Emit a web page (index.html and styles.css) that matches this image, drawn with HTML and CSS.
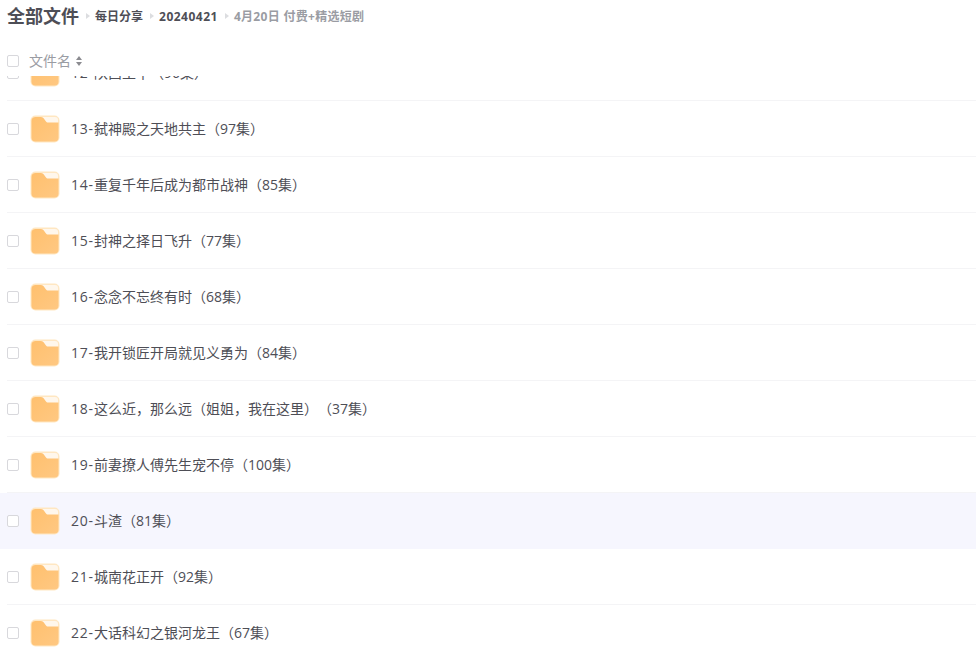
FILE: index.html
```html
<!DOCTYPE html>
<html lang="zh-CN">
<head>
<meta charset="utf-8">
<title>全部文件</title>
<link rel="stylesheet" href="styles.css">
</head>
<body>
<svg class="defs" width="0" height="0" aria-hidden="true">
  <defs>
    <linearGradient id="fg" x1="0" y1="0" x2="1" y2="1"><stop offset="0" stop-color="#ffc06e"/><stop offset="1" stop-color="#ffc882"/></linearGradient>
    <symbol id="folder" viewBox="0 0 30 28">
      <rect x="0.5" y="0.5" width="29" height="27" rx="5" fill="#ffe7c2"/>
      <rect x="2" y="2" width="26" height="22" rx="3" fill="#fff7ec"/>
      <path d="M1.500 6a4 4 0 0 1 4-4h5.500c1.500 0 2.200 .7 3 1.800l1.800 2.400c.6.8 1.200 1.300 2.200 1.300H28.500V23a4 4 0 0 1-4 3.500H5.500a4 4 0 0 1-4-3.500z" fill="url(#fg)"/>
    </symbol>
  </defs>
</svg>
<div class="page">
  <nav class="crumbs">
    <span class="crumb-root">全部文件</span>
    <span class="sep"></span><span class="crumb">每日分享</span>
    <span class="sep"></span><span class="crumb num">20240421</span>
    <span class="sep"></span><span class="crumb current">4月20日 付费+精选短剧</span>
  </nav>
  <div class="head">
    <span class="check"></span>
    <span class="head-label">文件名</span>
    <span class="sort"><i class="up"></i><i class="down"></i></span>
  </div>
  <div class="viewport">
    <ul class="list">
      <li class="row"><div class="row-inner"><span class="check"></span><svg class="icon"><use href="#folder"/></svg><span class="name"><span class="idx">12-</span>陕西王千（96集）</span></div></li>
      <li class="row"><div class="row-inner"><span class="check"></span><svg class="icon"><use href="#folder"/></svg><span class="name"><span class="idx">13-</span>弑神殿之天地共主（97集）</span></div></li>
      <li class="row"><div class="row-inner"><span class="check"></span><svg class="icon"><use href="#folder"/></svg><span class="name"><span class="idx">14-</span>重复千年后成为都市战神（85集）</span></div></li>
      <li class="row"><div class="row-inner"><span class="check"></span><svg class="icon"><use href="#folder"/></svg><span class="name"><span class="idx">15-</span>封神之择日飞升（77集）</span></div></li>
      <li class="row"><div class="row-inner"><span class="check"></span><svg class="icon"><use href="#folder"/></svg><span class="name"><span class="idx">16-</span>念念不忘终有时（68集）</span></div></li>
      <li class="row"><div class="row-inner"><span class="check"></span><svg class="icon"><use href="#folder"/></svg><span class="name"><span class="idx">17-</span>我开锁匠开局就见义勇为（84集）</span></div></li>
      <li class="row"><div class="row-inner"><span class="check"></span><svg class="icon"><use href="#folder"/></svg><span class="name"><span class="idx">18-</span>这么近，那么远（姐姐，我在这里）（37集）</span></div></li>
      <li class="row"><div class="row-inner"><span class="check"></span><svg class="icon"><use href="#folder"/></svg><span class="name"><span class="idx">19-</span>前妻撩人傅先生宠不停（100集）</span></div></li>
      <li class="row hover"><div class="row-inner"><span class="check"></span><svg class="icon"><use href="#folder"/></svg><span class="name"><span class="idx">20-</span>斗渣（81集）</span></div></li>
      <li class="row"><div class="row-inner"><span class="check"></span><svg class="icon"><use href="#folder"/></svg><span class="name"><span class="idx">21-</span>城南花正开（92集）</span></div></li>
      <li class="row"><div class="row-inner"><span class="check"></span><svg class="icon"><use href="#folder"/></svg><span class="name"><span class="idx">22-</span>大话科幻之银河龙王（67集）</span></div></li>
    </ul>
  </div>
</div>
</body>
</html>
```
FILE: styles.css
```css
* { box-sizing: border-box; margin: 0; padding: 0; }
html, body { height: 100%; overflow: hidden; background: #fff; }
body { font-family: "Open Sans", "Noto Sans CJK SC", sans-serif; color: #4e4e56; }
.defs { position: absolute; }
.page { height: 647px; display: flex; flex-direction: column; }
.crumbs { height: 32px; padding-left: 7px; display: flex; align-items: center; gap: 5px; }
.crumb-root { font-size: 18px; font-weight: 700; line-height: 24px; color: #4e4e56; }
.crumb { font-size: 12px; font-weight: 700; line-height: 16px; margin-top: 2px; color: #4e4e56; }
.crumb.num { letter-spacing: .5px; margin-left: 0; }
.crumb.current { color: #9a9ca3; letter-spacing: .3px; margin-left: 0; }
.sep { width: 0; height: 0; border-left: 4px solid #dcdde0; border-top: 3px solid transparent; border-bottom: 3px solid transparent; margin-left: 2px; }
.head { height: 44px; flex: none; padding: 18px 0 0 7px; display: flex; align-items: flex-start; font-size: 14px; line-height: 22px; color: #9a9ca3; }
.head .check { margin-top: 5px; }
.check { flex: none; width: 12px; height: 12px; border: 1px solid #d8d8dc; border-radius: 2px; background: #fff; }
.head-label { margin-left: 10px; }
.sort { margin: 6px 0 0 5px; display: flex; flex-direction: column; gap: 2px; }
.sort i { display: block; width: 0; height: 0; border-left: 3.5px solid transparent; border-right: 3.5px solid transparent; }
.sort .up { border-bottom: 4px solid #8b8b90; }
.sort .down { border-top: 4px solid #8b8b90; }
.viewport { flex: 1; overflow: hidden; }
.list { list-style: none; margin-top: -31px; }
.row { padding-left: 7px; }
.row-inner { height: 56px; display: flex; align-items: center; font-size: 14px; line-height: 22px; border-bottom: 1px solid #f4f4f6; }
.row.hover { background: #f6f6fe; }
.row.hover .row-inner { border-bottom-color: transparent; }
.icon { flex: none; width: 30px; height: 28px; margin-left: 11px; }
.name { margin-left: 11px; text-spacing-trim: space-all; }
.idx { letter-spacing: .8px; }
```
